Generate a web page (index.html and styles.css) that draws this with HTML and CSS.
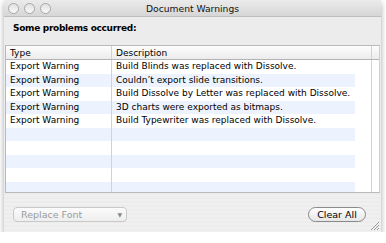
FILE: index.html
```html
<!DOCTYPE html>
<html lang="en">
<head>
  <meta charset="UTF-8">
  <title>Document Warnings</title>
  <link rel="stylesheet" href="styles.css">
</head>
<body>

  <div class="window">
    <div class="titlebar">
      <div class="lights">
        <span class="light"></span>
        <span class="light"></span>
        <span class="light"></span>
      </div>
      <div class="title">Document Warnings</div>
    </div>

    <div class="content">
      <div class="heading">Some problems occurred:</div>

      <div class="table">
        <div class="thead">
          <div class="th type">Type</div>
          <div class="th desc">Description</div>
          <div class="th corner"></div>
        </div>
        <div class="tbody" id="rows"></div>
      </div>
    </div>

    <div class="footer">
      <div class="popup">
        <span>Replace Font</span>
        <span class="arrow">&#9660;</span>
      </div>
      <div class="button">Clear All</div>
      <svg class="grip" width="9" height="9" viewBox="0 0 9 9">
        <line x1="1" y1="9" x2="9" y2="1" />
        <line x1="4" y1="9" x2="9" y2="4" />
        <line x1="7" y1="9" x2="9" y2="7" />
      </svg>
    </div>
  </div>

  <script>
    const warnings = [
      'Build Blinds was replaced with Dissolve.',
      'Couldn\u2019t export slide transitions.',
      'Build Dissolve by Letter was replaced with Dissolve.',
      '3D charts were exported as bitmaps.',
      'Build Typewriter was replaced with Dissolve.'
    ];
    const rows = document.getElementById('rows');

    // fill with empty striped rows after the warnings
    for (let i = 0; i < 10; i++) {
      const row = document.createElement('div');
      row.className = 'row' + (i % 2 ? ' odd' : '');
      const text = warnings[i];
      row.innerHTML = `
        <div class="td type">${text ? 'Export Warning' : ''}</div>
        <div class="td desc">${text || ''}</div>
        <div class="td rest"></div>
      `;
      rows.appendChild(row);
    }
  </script>

</body>
</html>
```

FILE: styles.css
```css
body {
  margin: 0;
  background: #fff;
  font-family: "DejaVu Sans", sans-serif;
  font-size: 9px;
  color: #000;
}
.window {
  margin-left: 4px;
  width: 377px;
  height: 232px;
  background: #ececec;
  box-shadow: 0 3px 6px rgba(0, 0, 0, 0.35);
  display: flex;
  flex-direction: column;
}
.titlebar {
  height: 16px;
  background: linear-gradient(#ebebeb, #d6d6d6);
  border-bottom: 1px solid #bdbdbd;
  display: flex;
  align-items: center;
  position: relative;
}
.lights {
  display: flex;
  gap: 5px;
  padding-left: 4px;
}
.light {
  width: 9px;
  height: 9px;
  border-radius: 50%;
  border: 1px solid #a6a6a6;
  background: linear-gradient(#e2e2e2, #f8f8f8);
}
.title {
  position: absolute;
  left: 0;
  right: 0;
  text-align: center;
  font-size: 9.2px;
  color: #111;
}
.content {
  padding: 0 1px;
}
.heading {
  font-weight: bold;
  font-size: 9px;
  letter-spacing: -0.3px;
  padding: 6px 0 0 8px;
  height: 28px;
  box-sizing: border-box;
}
.table {
  border: 1px solid #b9b9b9;
  border-right-color: #d0d0d0;
  background: #fff;
  height: 148px;
  box-sizing: border-box;
  overflow: hidden;
}
.thead {
  display: flex;
  height: 13px;
  background: linear-gradient(#fdfdfd, #ececec);
  border-bottom: 1px solid #b3b3b3;
}
.th {
  padding-left: 4px;
  line-height: 14px;
  box-sizing: border-box;
}
.th.type, .td.type {
  width: 106px;
  border-right: 1px solid #d2d2d2;
}
.th.desc {
  width: 260px;
  border-right: 1px solid #d2d2d2;
}
.th.corner {
  flex: 1;
}
.row {
  display: flex;
  height: 13.5px;
  line-height: 13.5px;
}
.td {
  padding-left: 4px;
  box-sizing: border-box;
  white-space: nowrap;
}
.td.desc {
  width: 243px;
}
.td.rest {
  width: 17px;
  border-right: 1px solid #d2d2d2;
}
.row.odd .td.type,
.row.odd .td.desc {
  background: #edf3fe;
}
.footer {
  flex: 1;
  display: flex;
  align-items: center;
  justify-content: space-between;
  padding: 3px 15px 0 9px;
  position: relative;
  background: repeating-linear-gradient(#ececec 0, #ececec 2px, #f0f0f0 2px, #f0f0f0 4px);
}
.popup {
  width: 114px;
  height: 15px;
  box-sizing: border-box;
  border: 1px solid #c9c9c9;
  border-radius: 4px;
  background: linear-gradient(#fbfbfb, #eeeeee);
  color: #9a9a9a;
  display: flex;
  align-items: center;
  justify-content: space-between;
  padding: 0 4px 0 7px;
  font-size: 9.5px;
}
.popup .arrow {
  font-size: 6px;
  color: #888;
}
.button {
  width: 58px;
  height: 15px;
  box-sizing: border-box;
  border: 1px solid #8a8a8a;
  border-radius: 8px;
  background: linear-gradient(#ffffff, #e6e6e6);
  text-align: center;
  line-height: 13px;
  font-size: 9.5px;
}
.grip {
  position: absolute;
  right: 2px;
  bottom: 2px;
}
.grip line {
  stroke: #9a9a9a;
  stroke-width: 1;
}
```
